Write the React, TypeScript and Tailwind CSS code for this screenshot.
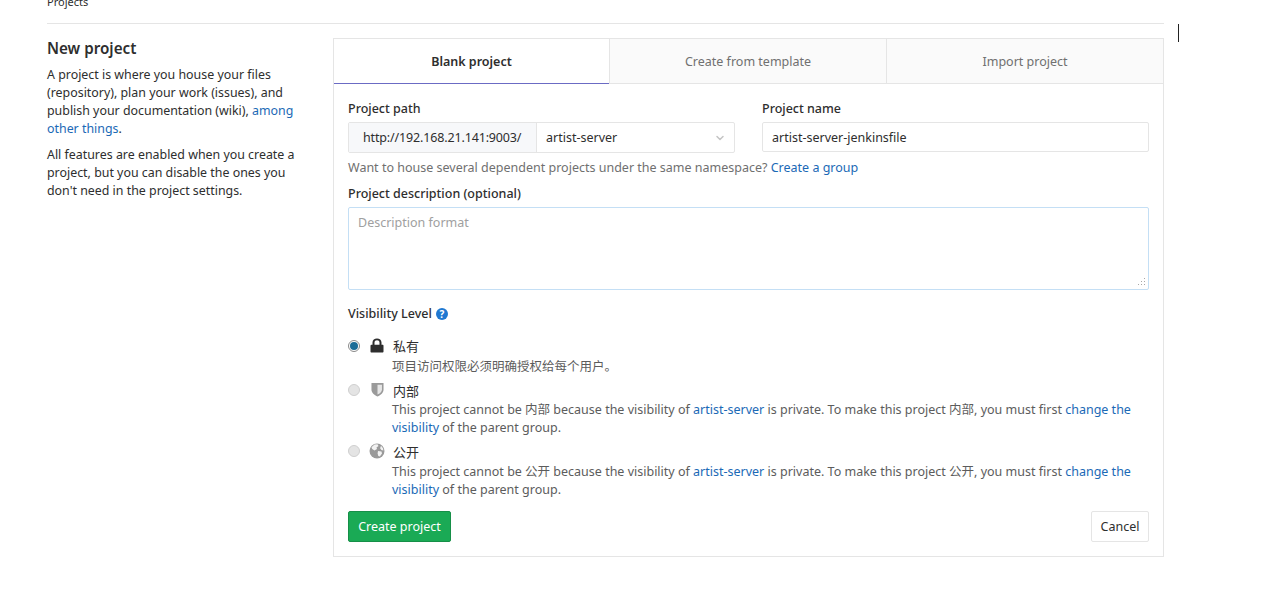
import { ChevronDown } from "lucide-react";

const FONT = "font-['Noto_Sans','Noto_Sans_CJK_SC',sans-serif]";

function Radio({ checked }: { checked?: boolean }) {
  return (
    <span
      className={
        checked
          ? "mt-[1px] flex h-[12px] w-[12px] items-center justify-center rounded-full border border-[#8a8a8a] bg-white"
          : "mt-[1px] block h-[12px] w-[12px] rounded-full border border-[#cfcfcf] bg-[#e4e4e4]"
      }
    >
      {checked && <span className="h-[8px] w-[8px] rounded-full bg-[#1b6c97]" />}
    </span>
  );
}

function Lock() {
  return (
    <svg width="14" height="15" viewBox="0 0 14 15.500" preserveAspectRatio="none" className="-ml-[1px] -mt-[1px]">
      <path
        d="M1.500 7h1V4.600C2.500 2.100 4.500.5 7 .5s4.500 1.600 4.500 4.100V7h1c.6 0 1 .4 1 1v6c0 .6-.4 1-1 1h-11c-.6 0-1-.4-1-1V8c0-.6.4-1 1-1zm3 0h5V4.600C9.500 3.200 8.400 2.300 7 2.300s-2.500.9-2.500 2.300V7z"
        fill="#2e2e2e"
      />
    </svg>
  );
}

function Shield() {
  return (
    <svg width="13" height="15" viewBox="0 0 14 16" className="-mt-[1px]">
      <path d="M0.500 1h13v7c0 3.500-3 6-6.500 7.500C3.500 14 .5 11.500.5 8V1z" fill="#9a9a9a" />
      <path d="M7 2.800h4.800V8c0 2.500-2.200 4.300-4.800 5.500V2.800z" fill="#e6e6e6" />
    </svg>
  );
}

function Globe() {
  return (
    <svg width="16" height="16" viewBox="0 0 16 16" className="-ml-[2px] -mt-[1px]">
      <circle cx="8" cy="8" r="7.500" fill="#9a9a9a" />
      <path
        d="M5.500 1.500 8.500 1.200 9.500 3 7.500 4.500 8 6 5.500 7.500 3.200 6 2.500 4.200zM9 8l3.500.5L13 10.500 10.800 13.500 9.300 13 8.600 10.500zM12 2.800l2 2.400.4 2.300-2-.6-1.300-1.600z"
        fill="#f2f2f2"
      />
    </svg>
  );
}

function Help() {
  return (
    <span className="ml-[4px] inline-flex h-[12px] w-[12px] items-center justify-center rounded-full bg-[#1f78d1] text-[10px] font-bold leading-none text-white">
      ?
    </span>
  );
}

function Link({ children }: { children: React.ReactNode }) {
  return <a className="text-[#1b69b6]">{children}</a>;
}

function Option({
  icon,
  checked,
  label,
  labelClass,
  children,
}: {
  icon: React.ReactNode;
  checked?: boolean;
  label: string;
  labelClass: string;
  children: React.ReactNode;
}) {
  return (
    <div className="flex">
      <div className="w-[23px] shrink-0">
        <Radio checked={checked} />
      </div>
      <div className="flex w-[21px] shrink-0 justify-start">{icon}</div>
      <div className="min-w-0">
        <div className={`ml-[1px] text-[13px] text-[#2e2e2e] ${labelClass}`}>{label}</div>
        <div className="text-[#5c5c5c]">{children}</div>
      </div>
    </div>
  );
}

export default function App() {
  return (
    <div className={`${FONT} relative h-[605px] overflow-hidden bg-white text-[12.500px] leading-[18px] text-[#2e2e2e]`}>
      <div className="absolute left-[1178px] top-[24px] h-[18px] w-px bg-[#222]" />
      <div className="ml-[47px] w-[1117px]">
        <div className="-mt-[7px] h-[31px] border-b border-[#e5e5e5] text-[11px] leading-[18px]">Projects</div>
        <div className="flex pt-[14px]">
          <div className="w-[286px] shrink-0">
            <h4 className="mb-[8px] text-[15.200px] font-semibold leading-[20px] text-[#2e2e2e]">New project</h4>
            <p className="mb-[8px] w-[256px] text-[12.400px] text-[#2e2e2e]">
              A project is where you house your files (repository), plan your work (issues), and publish your documentation (wiki), <Link>among other things</Link>.
            </p>
            <p className="w-[256px] text-[12.400px]">
              All features are enabled when you create a project, but you can disable the ones you don't need in the project settings.
            </p>
          </div>
          <div className="h-[519px] w-[831px] shrink-0 border border-[#e5e5e5]">
            <div className="flex h-[45px] text-center leading-[46px]">
              <div className="w-[275px] border-b border-[#6b6bc4] font-semibold text-[#2e2e2e]">Blank project</div>
              <div className="w-[277px] border-b border-l border-[#e5e5e5] bg-[#fafafa] text-[#707070]">Create from template</div>
              <div className="flex-1 border-b border-l border-[#e5e5e5] bg-[#fafafa] text-[#707070]">Import project</div>
            </div>
            <div className="px-[14px] pt-[16px]">
              <div className="flex">
                <div className="w-[387px]">
                  <div className="mb-[4px] font-medium">Project path</div>
                  <div className="flex h-[31px] rounded-[2px] border border-[#e5e5e5] leading-[29px]">
                    <div className="w-[188px] border-r border-[#e5e5e5] bg-[#f7f8fa] pl-[14px] tracking-[-0.15px]">http://192.168.21.141:9003/</div>
                    <div className="flex flex-1 items-center justify-between pl-[9px] pr-[8px]">
                      <span>artist-server</span>
                      <ChevronDown size={12} strokeWidth={3} className="text-[#c4c4c4]" />
                    </div>
                  </div>
                </div>
                <div className="ml-[27px] flex-1">
                  <div className="mb-[4px] font-medium">Project name</div>
                  <div className="h-[30px] rounded-[2px] border border-[#e5e5e5] pl-[9px] leading-[29px]">artist-server-jenkinsfile</div>
                </div>
              </div>
              <div className="mt-[6px] text-[#707070]">
                Want to house several dependent projects under the same namespace? <Link>Create a group</Link>
              </div>
              <div className="mt-[8px] font-medium">Project description (optional)</div>
              <div className="relative mt-[4px] h-[83px] rounded-[2px] border border-[#c4dff5] pl-[9px] pt-[6px] text-[#a0a0a0]">
                Description format
                <svg width="9" height="9" viewBox="0 0 9 9" className="absolute bottom-[2px] right-[2px]">
                  <g fill="#a8a8a8">
                    <rect x="7" y="0" width="1" height="1" />
                    <rect x="4" y="3" width="1" height="1" />
                    <rect x="7" y="3" width="1" height="1" />
                    <rect x="1" y="6" width="1" height="1" />
                    <rect x="4" y="6" width="1" height="1" />
                    <rect x="7" y="6" width="1" height="1" />
                  </g>
                </svg>
              </div>
              <div className="mt-[15px] flex items-center font-medium">
                <span>Visibility Level</span>
                <Help />
              </div>
              <div className="mt-[16px]">
                <Option icon={<Lock />} checked label="私有" labelClass="-mt-[2px] mb-[3px]">
                  项目访问权限必须明确授权给每个用户。
                </Option>
              </div>
              <div className="mt-[7px]">
                <Option icon={<Shield />} label="内部" labelClass="-mt-[1px] mb-[1px]">
                  This project cannot be 内部 because the visibility of <Link>artist-server</Link> is private. To make this project 内部, you must first <Link>change the visibility</Link> of the parent group.
                </Option>
              </div>
              <div className="mt-[7px]">
                <Option icon={<Globe />} label="公开" labelClass="-mt-[1px] mb-[2px]">
                  This project cannot be 公开 because the visibility of <Link>artist-server</Link> is private. To make this project 公开, you must first <Link>change the visibility</Link> of the parent group.
                </Option>
              </div>
              <div className="mt-[12px] flex justify-between">
                <button className="h-[31px] w-[103px] rounded-[2px] border border-[#168f48] bg-[#1aaa55] pt-[1px] text-white">Create project</button>
                <button className="h-[31px] w-[58px] rounded-[2px] border border-[#e5e5e5] bg-white pt-[1px] text-[#2e2e2e]">Cancel</button>
              </div>
            </div>
          </div>
        </div>
      </div>
    </div>
  );
}
